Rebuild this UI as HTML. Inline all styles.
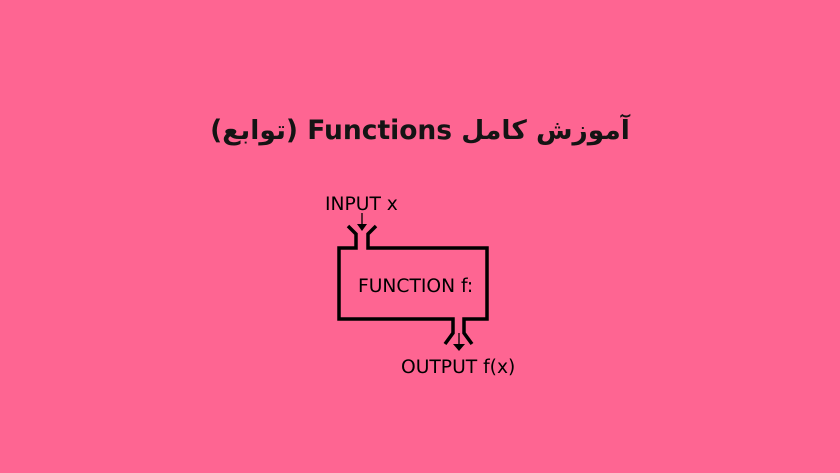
<!DOCTYPE html>
<html><head><meta charset="utf-8"><style>
html,body{margin:0;padding:0}
body{width:840px;height:473px;background:#fe6592;overflow:hidden;position:relative}
.t{position:absolute;left:0;right:0;top:115px;text-align:center;font:bold 26.5px "DejaVu Sans","Liberation Sans",sans-serif;color:#141414;direction:rtl}
</style></head><body>
<div class="t">آموزش کامل Functions (توابع)</div>
<svg width="840" height="473" style="position:absolute;left:0;top:0">
<g fill="none" stroke="#000" stroke-width="3.5" stroke-linejoin="miter">
<path d="M348,226 L356,234 L356,248 L339,248 L339,319 L453,319 L453,333 L445,344"/>
<path d="M376,226 L368,234 L368,248 L487,248 L487,319 L464,319 L464,333 L472,344"/>
</g>
<g stroke="#000" stroke-width="1.3"><line x1="362" y1="213" x2="362" y2="226"/><line x1="459" y1="333" x2="459" y2="346"/></g>
<polygon points="357,224 367,224 362,231" fill="#000"/>
<polygon points="453,344 465,344 459,351" fill="#000"/>
<g font-family="DejaVu Sans, Liberation Sans, sans-serif" font-size="18.7" fill="#000">
<text x="325" y="210">INPUT x</text>
<text x="358" y="292">FUNCTION f:</text>
<text x="401" y="373">OUTPUT f(x)</text>
</g>
</svg>
</body></html>
